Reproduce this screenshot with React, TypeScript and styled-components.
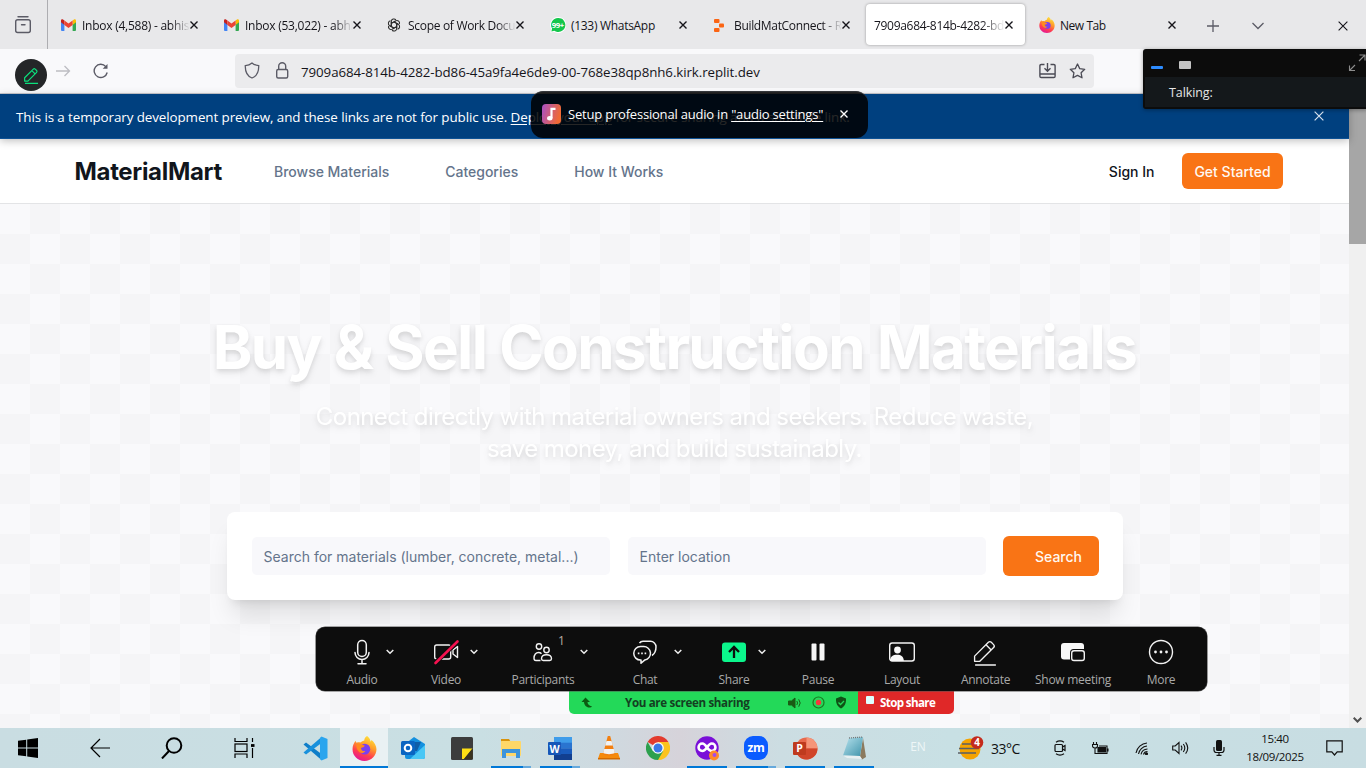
import React from "react";
import styled, { createGlobalStyle, css } from "styled-components";

const GlobalStyle = createGlobalStyle`
  * { box-sizing: border-box; }
  html, body { margin: 0; padding: 0; overflow: hidden; }
  body { font-family: "Open Sans", "Noto Sans", sans-serif; }
  svg { display: block; flex: none; }
`;

const Screen = styled.div`
  position: relative;
  width: 1366px;
  height: 768px;
  overflow: hidden;
  display: flex;
  flex-direction: column;
  background: #f9f9fb;
`;

/* ---------- browser tabs ---------- */

const TabStrip = styled.div`
  display: flex;
  align-items: stretch;
  height: 49px;
  background: #e8e8ea;
`;

const RecentButton = styled.div`
  flex: none;
  width: 48px;
  display: flex;
  align-items: center;
  padding-left: 13px;
  padding-top: 1px;
  border-right: 1px solid #adadb1;
  margin-right: 1px;
`;

const TabSlot = styled.div`
  flex: none;
  width: 163px;
  padding: 4px 2px;
`;

const Tab = styled.div<{ $active?: boolean }>`
  height: 41px;
  display: flex;
  align-items: center;
  padding: 1px 12px 0 ${(p) => (p.$active ? "8px" : "10px")};
  border-radius: 4px;
  ${(p) =>
    p.$active &&
    css`
      background: #fff;
      box-shadow: 0 0 3px rgba(0, 0, 0, 0.35);
    `}
`;

const TabTitle = styled.span<{ $fade: boolean; $spacing: number }>`
  flex: 1;
  min-width: 0;
  overflow: hidden;
  white-space: nowrap;
  padding-top: 1px;
  font-size: 12px;
  line-height: 18px;
  letter-spacing: ${(p) => p.$spacing}px;
  color: #15141a;
  ${(p) =>
    p.$fade &&
    css`
      mask-image: linear-gradient(to right, #000 82%, transparent 100%);
    `}
`;

const TabIcon = styled.span`
  width: 16px;
  margin-right: 5px;
`;

const StripButton = styled.div<{ $width: number }>`
  flex: none;
  width: ${(p) => p.$width}px;
  display: flex;
  align-items: center;
  justify-content: center;
  padding-top: 2px;
`;

/* ---------- toolbar ---------- */

const Toolbar = styled.div`
  display: flex;
  align-items: center;
  height: 45px;
  padding: 0 0 1px 56px;
  background: #f9f9fb;
  border-bottom: 1px solid #cacacf;
`;

const NavIcons = styled.div`
  display: flex;
  align-items: center;
  width: 179px;
  gap: 22px;
`;

const UrlBar = styled.div`
  display: flex;
  align-items: center;
  width: 859px;
  height: 34px;
  padding: 0 8px 0 9px;
  border-radius: 4px;
  background: #ebebed;
`;

const UrlIcon = styled.span<{ $gap: number }>`
  margin-right: ${(p) => p.$gap}px;
`;

const Url = styled.span`
  flex: 1;
  padding-top: 2px;
  font-size: 13.3px;
  letter-spacing: -0.07px;
  color: #15141a;
  white-space: nowrap;
`;

/* ---------- page ---------- */

const Viewport = styled.div`
  display: flex;
  height: 634px;
`;

const Page = styled.div`
  width: 1349px;
  display: flex;
  flex-direction: column;
`;

const Banner = styled.div`
  position: relative;
  display: flex;
  align-items: center;
  justify-content: space-between;
  height: 45px;
  padding: 2px 25px 0 16px;
  background: #00407f;
  border-bottom: 1px solid #0d5296;
  box-shadow: 0 2px 8px rgba(0, 0, 0, 0.25);
  color: #fff;
  font-size: 13.4px;
  letter-spacing: -0.09px;
  white-space: nowrap;
`;

const BannerClose = styled.span`
  padding-bottom: 2px;
`;

const Link = styled.span`
  text-decoration: underline;
  text-underline-offset: 2px;
`;

const SiteHeader = styled.header`
  display: flex;
  align-items: center;
  height: 65px;
  padding: 0 66px 0 74.5px;
  background: #fff;
  border-bottom: 1px solid #e3e4e6;
  font-family: Inter, sans-serif;
`;

const Brand = styled.div`
  width: 199.5px;
  font-size: 24px;
  font-weight: 700;
  letter-spacing: -0.33px;
  color: #11151c;
`;

const Nav = styled.nav`
  flex: 1;
  display: flex;
  gap: 56px;
  font-size: 14px;
  font-weight: 500;
  letter-spacing: -0.01px;
  color: #64748b;
`;

const SignIn = styled.span`
  margin-right: 27.5px;
  font-size: 14px;
  font-weight: 500;
  color: #11151c;
`;

const OrangeButton = styled.div<{ $w: number; $h: number; $padLeft?: number }>`
  width: ${(p) => p.$w}px;
  height: ${(p) => p.$h}px;
  padding-left: ${(p) => p.$padLeft ?? 0}px;
  display: flex;
  align-items: center;
  justify-content: center;
  border-radius: 6px;
  background: #f97415;
  color: #fff8f2;
  font-size: 14px;
  font-weight: 500;
  white-space: nowrap;
`;

const Hero = styled.main`
  flex: 1;
  display: flex;
  flex-direction: column;
  align-items: center;
  padding-top: 113px;
  background: repeating-conic-gradient(#f5f5f7 0 25%, #f9f9fb 0 50%) 0 0 / 60px 60px;
  font-family: Inter, sans-serif;
  color: #fff;
  text-align: center;
`;

const Title = styled.h1`
  margin: 0;
  font-size: 60px;
  line-height: 60px;
  font-weight: 700;
  letter-spacing: -1.56px;
  white-space: nowrap;
  filter: drop-shadow(0 4px 3px rgba(0, 0, 0, 0.08)) drop-shadow(0 2px 2px rgba(0, 0, 0, 0.07));
`;

const Subtitle = styled.p`
  margin: 24px 0 0;
  font-size: 24px;
  line-height: 32px;
  letter-spacing: -0.57px;
  white-space: nowrap;
  filter: drop-shadow(0 4px 3px rgba(0, 0, 0, 0.08)) drop-shadow(0 2px 2px rgba(0, 0, 0, 0.07));
`;

const SearchCard = styled.div`
  display: flex;
  align-items: center;
  width: 896px;
  height: 88px;
  margin-top: 47px;
  padding: 0 24px 0 25px;
  border-radius: 8px;
  background: #fff;
  box-shadow: 0 20px 25px -5px rgba(0, 0, 0, 0.1), 0 8px 10px -6px rgba(0, 0, 0, 0.1);
`;

const Field = styled.div<{ $gap: number }>`
  width: 358px;
  height: 38px;
  margin-right: ${(p) => p.$gap}px;
  padding: 0 12px;
  border-radius: 5px;
  background: #f8f8fb;
  color: #64748b;
  font-size: 14px;
  line-height: 39px;
  text-align: left;
`;

const Scrollbar = styled.div`
  width: 17px;
  display: flex;
  flex-direction: column;
  justify-content: space-between;
  align-items: center;
  background: #f0f0f0;
`;

const Thumb = styled.div`
  width: 17px;
  height: 150px;
  background: #a6a6a6;
`;

const ScrollArrow = styled.div`
  height: 11px;
`;

/* ---------- floating meeting pieces ---------- */

const AnnotateBadge = styled.div`
  position: absolute;
  left: 15px;
  top: 59px;
  width: 32px;
  height: 32px;
  display: flex;
  align-items: center;
  justify-content: center;
  border-radius: 50%;
  background: #242628;
`;

const Toast = styled.div`
  position: absolute;
  z-index: 3;
  left: 531px;
  top: 91px;
  width: 337px;
  height: 47px;
  display: flex;
  align-items: center;
  padding: 0 18px 2px 11px;
  border-radius: 12px;
  background: rgba(0, 0, 0, 0.85);
  border-top: 1px solid #34363a;
  color: #fff;
  font-size: 13px;
  white-space: nowrap;
`;

const ToastText = styled.span`
  width: 272px;
  margin-left: 7px;
  letter-spacing: -0.2px;
`;

const TalkPanel = styled.div`
  position: absolute;
  z-index: 3;
  left: 1143px;
  top: 49px;
  width: 225px;
  height: 60px;
  padding: 0 2px 2px;
  border-radius: 3px;
  background: #0c0c0c;
  box-shadow: 0 1px 4px rgba(0, 0, 0, 0.35);
`;

const TalkTop = styled.div`
  display: flex;
  align-items: center;
  height: 28px;
`;

const MiniMark = styled.span`
  width: 12px;
  height: 3px;
  margin: 9px 16px 0 6px;
  border-radius: 1px;
  background: #2d8cff;
`;

const StripMark = styled.span`
  width: 12px;
  height: 8px;
  margin: 4px 157px 0 0;
  border-radius: 1px;
  background: #c4c4c4;
`;

const TalkBody = styled.div`
  height: 30px;
  padding-left: 24px;
  line-height: 31px;
  background: #14181b;
  color: #e6e6e6;
  font-size: 12.5px;
  letter-spacing: -0.1px;
`;

const MeetingBar = styled.div`
  position: absolute;
  left: 316px;
  top: 627px;
  width: 891px;
  height: 64px;
  display: flex;
  padding: 0 4px;
  border-radius: 9px;
  background: #0d0d0d;
  box-shadow: 0 0 0 0.6px #555;
`;

const MeetingItem = styled.div<{ $w: number }>`
  position: relative;
  width: ${(p) => p.$w}px;
  display: flex;
  flex-direction: column;
  align-items: center;
  padding-top: 11px;
`;

const MeetingLabel = styled.span`
  margin-top: 5px;
  font-size: 12px;
  line-height: 18px;
  letter-spacing: -0.28px;
  color: #a9a9a9;
  white-space: nowrap;
`;

const Caret = styled.span`
  position: absolute;
  right: 10px;
  top: 22px;
`;

const Count = styled.span`
  position: absolute;
  left: 70px;
  top: 5px;
  font-size: 12px;
  color: #b9ada2;
`;

const ShareBar = styled.div`
  position: absolute;
  left: 569px;
  top: 691px;
  width: 385px;
  height: 23px;
  display: flex;
  border-radius: 0 0 5px 5px;
  overflow: hidden;
  font-size: 11.6px;
  font-weight: 700;
  letter-spacing: -0.34px;
  white-space: nowrap;
`;

const SharingPart = styled.div`
  display: flex;
  align-items: center;
  width: 289px;
  padding-left: 12px;
  background: #23d959;
  color: #143f22;
`;

const SharingText = styled.span`
  width: 163px;
  margin-left: 31px;
`;

const SharingIcons = styled.span`
  display: flex;
  align-items: center;
  gap: 10px;
`;

const StopPart = styled.div`
  display: flex;
  flex: 1;
  align-items: center;
  padding: 0 0 1px 8px;
  background: #e02828;
  color: #fff;
  letter-spacing: -0.62px;
`;

const StopSquare = styled.span`
  width: 8px;
  height: 8px;
  margin: 0 6px 4px 0;
  border-radius: 1px;
  background: #dff;
`;

/* ---------- taskbar ---------- */

const Taskbar = styled.div`
  display: flex;
  height: 40px;
  background: linear-gradient(
    to right,
    #c9dde2 0,
    #c9dfe3 480px,
    #cedae0 600px,
    #d6d3da 680px,
    #ccdde2 780px,
    #c8e0e4 950px,
    #c8dde2 1366px
  );
`;

const SystemGroup = styled.div`
  display: flex;
  width: 291px;
`;

const SystemButton = styled.div<{ $first?: boolean }>`
  width: ${(p) => (p.$first ? 64 : 72)}px;
  padding-right: ${(p) => (p.$first ? 8 : 0)}px;
  display: flex;
  align-items: center;
  justify-content: center;
`;

const AppGroup = styled.div`
  display: flex;
  gap: 1px;
  width: 587px;
`;

const AppButton = styled.div<{ $active?: boolean }>`
  width: 48px;
  display: flex;
  flex-direction: column;
  align-items: center;
  justify-content: space-between;
  padding-top: 7px;
  background: ${(p) => (p.$active ? "#e9f1f3" : "transparent")};
`;

const Underline = styled.span<{ $kind: "full" | "one" | "stack" }>`
  width: ${(p) => (p.$kind === "full" ? 48 : 40)}px;
  height: 2px;
  background: ${(p) =>
    p.$kind === "stack" ? "linear-gradient(to right, #0078d7 32px, #66a9dc 32px)" : "#0078d7"};
`;

const Tray = styled.div`
  display: flex;
  align-items: center;
  width: 488px;
  font-size: 12px;
  color: #111;
`;

const TrayCell = styled.div<{ $w: number; $ml?: number }>`
  width: ${(p) => p.$w}px;
  margin-left: ${(p) => p.$ml ?? 0}px;
  display: flex;
  align-items: center;
  justify-content: center;
`;

const Language = styled(TrayCell)`
  padding-bottom: 4px;
  color: #eef6f7;
`;

const Weather = styled(TrayCell)`
  justify-content: flex-start;
  gap: 7px;
  font-size: 14px;
  letter-spacing: -0.5px;
`;

const Clock = styled.div`
  width: 66px;
  margin-left: 3px;
  text-align: center;
  font-size: 11.5px;
  line-height: 18px;
  letter-spacing: -0.36px;
  padding-bottom: 1px;
`;

/* ---------- icons ---------- */

const CloseIcon = ({ size = 8, color = "#15141a", w = 1.4 }: { size?: number; color?: string; w?: number }) => (
  <svg width={size} height={size} viewBox="0 0 8 8" stroke={color} strokeWidth={(w * 8) / size} fill="none">
    <path d="M.5.5l7 7M7.5.5l-7 7" />
  </svg>
);

const Gmail = () => (
  <svg width="15" height="12" viewBox="0 0 15 12">
    <path d="M0 2v9a1 1 0 0 0 1 1h2.4V4.5z" fill="#4285f4" />
    <path d="M15 2v9a1 1 0 0 1-1 1h-2.4V4.5z" fill="#34a853" />
    <path d="M11.6 1.6L13 .5c1-.6 2 0 2 1.2v1.6l-3.4 2.6z" fill="#fbbc04" />
    <path d="M3.4 1.6L2 .5C1 0 0 .5 0 1.7v1.6l3.4 2.6z" fill="#c5221f" />
    <path d="M3.4 1.5L7.5 4.6l4.1-3.1v4.4L7.5 9 3.4 5.9z" fill="#ea4335" />
  </svg>
);

const Gpt = () => (
  <svg width="14" height="14" viewBox="0 0 14 14" fill="none" stroke="#2b2b2b" strokeWidth="1.05">
    {[0, 60, 120, 180, 240, 300].map((a) => (
      <path key={a} transform={`rotate(${a} 7 7)`} d="M4.3 8.4V3.5a2.6 2.6 0 0 1 4.6-1.6M4.3 5.4l4.2-2.4" />
    ))}
  </svg>
);

const WhatsApp = () => (
  <svg width="16" height="16" viewBox="0 0 16 16">
    <path d="M8 0a8 8 0 0 0-6.8 12L.3 15.7 4 14.8A8 8 0 1 0 8 0z" fill="#fff" />
    <path d="M8 1a7 7 0 0 0-5.9 10.6L1.4 14.4l2.9-.7A7 7 0 1 0 8 1z" fill="#14c64c" />
    <text x="7.8" y="10.8" textAnchor="middle" fontSize="7.8" fontWeight="700" fill="#fff" letterSpacing="-.5">
      99+
    </text>
  </svg>
);

const Replit = () => (
  <svg width="12" height="13" viewBox="0 0 12 13" fill="#fb6413">
    <rect x="1" y="0" width="5.5" height="4" rx="1" />
    <rect x="6" y="4.5" width="5" height="4" rx="1" />
    <rect x="1" y="9" width="5.5" height="4" rx="1" />
  </svg>
);

const Firefox = ({ size = 16 }: { size?: number }) => (
  <svg width={size} height={size} viewBox="0 0 24 24">
    <defs>
      <linearGradient id="ffx" x1=".75" y1="0" x2=".3" y2="1">
        <stop offset="0" stopColor="#ffe83b" />
        <stop offset=".4" stopColor="#ff9a2b" />
        <stop offset=".7" stopColor="#ff3f4f" />
        <stop offset="1" stopColor="#e3149a" />
      </linearGradient>
    </defs>
    <path
      d="M14.5 0c2 1.6 3 3 3.3 5.2C18.5 5 18.7 4.2 18.5 3.5c3 2.3 5 5.8 5 9.3C23.5 19 18.5 24 12 24S.5 19.2.5 12.8c0-3.5 1.3-6 3-8.3.1 1 .4 1.6 1 2C5.8 6 7 6 8 6.3c1.2-1.2 2.5-1.9 3.8-2.1C11.8 2.5 13 .9 14.5 0z"
      fill="url(#ffx)"
    />
    <circle cx="12.3" cy="12.6" r="5.2" fill="#7a3ff0" />
    <path d="M4 8c3-1.5 5 .5 8.200 1.200-.2 1.600-2 2-3.600 2.300.2 2.500 2 3.400 4.200 2.800C10.500 18 4.500 17 4 8z" fill="#ff8a20" />
  </svg>
);

const Pencil = ({ size, color, w }: { size: number; color: string; w: number }) => (
  <svg width={size} height={size} viewBox="-1 -1 26 26" fill="none" stroke={color} strokeWidth={w} strokeLinejoin="round">
    <path d="M1.5 20.5v-5L14.8 2.2a2 2 0 0 1 2.8 0l2.2 2.2a2 2 0 0 1 0 2.8L6.5 20.5zM12.5 4.5l5 5M2 24h20" />
  </svg>
);

const CaretDown = () => (
  <svg width="8" height="6" viewBox="0 0 8 6" fill="none" stroke="#eee" strokeWidth="1.5">
    <path d="M.7 1l3.3 3.3L7.300 1" />
  </svg>
);

const MicIcon = () => (
  <svg width="28" height="28" viewBox="0 0 28 28" fill="none" stroke="#f2f2f2" strokeWidth="1.5" strokeLinecap="round">
    <rect x="9.7" y="2.5" width="8.6" height="16" rx="4.3" />
    <path d="M7 14.5a7 7 0 0 0 14 0M14 21.500v4M10 25.700h8" />
  </svg>
);

const VideoIcon = () => (
  <svg width="28" height="28" viewBox="0 0 28 28" fill="none" stroke="#f2f2f2" strokeWidth="1.4" strokeLinejoin="round">
    <rect x="2.700" y="7" width="16" height="14" rx="2" />
    <path d="M21 12l4.500-3.500v11L21 16z" />
    <path d="M3 25L25.500 3.500" stroke="#0d0d0d" strokeWidth="4.500" />
    <path d="M3.500 25L25.500 3.500" stroke="#f5114f" strokeWidth="2.600" strokeLinecap="round" />
  </svg>
);

const PeopleIcon = () => (
  <svg width="28" height="28" viewBox="0 0 28 28" fill="none" stroke="#f2f2f2" strokeWidth="1.4" strokeLinejoin="round">
    <circle cx="10" cy="8.5" r="2.7" />
    <circle cx="17.5" cy="12" r="2.7" />
    <path d="M11.5 22.5H7c-1.5 0-2-.7-2-2.2 0-3.6 2-5.8 4.5-5.8 1.3 0 2.3.4 3 1.2" />
    <path d="M17.5 16.8c3 0 5 1.7 5 4 0 1.2-.7 1.7-1.8 1.7h-6.4c-1.1 0-1.8-.5-1.8-1.7 0-2.3 2-4 5-4z" />
  </svg>
);

const ChatIcon = () => (
  <svg width="28" height="28" viewBox="0 0 28 28" fill="none" stroke="#f2f2f2" strokeWidth="1.5" strokeLinejoin="round">
    <path d="M9.5 8.6h3a6.7 6.7 0 0 1 1.4 13.3L10 25.3v-3.2h-.5a6.75 6.75 0 0 1 0-13.5z" />
    <path d="M8.5 5.2C9.3 3.8 10.6 3.3 12 3.3h7.5a5.5 5.5 0 0 1 5.5 5.5c0 4-1.3 7-4 8.7" />
    <path d="M6.8 15.3h1.6M10.2 15.3h1.6M13.6 15.3h1.6" strokeWidth="1.8" />
  </svg>
);

const ShareIcon = () => (
  <svg width="28" height="28" viewBox="0 0 28 28">
    <rect x="2" y="4.5" width="24" height="19.5" rx="3" fill="#0bf68c" />
    <path d="M14 20V9.5M9 14l5-5 5 5" fill="none" stroke="#0d0d0d" strokeWidth="2.3" />
  </svg>
);

const PauseIcon = () => (
  <svg width="28" height="28" viewBox="0 0 28 28" fill="#f6f6f6">
    <rect x="7.5" y="5.5" width="5" height="17" rx="1" />
    <rect x="15.5" y="5.5" width="5" height="17" rx="1" />
  </svg>
);

const LayoutIcon = () => (
  <svg width="28" height="28" viewBox="0 0 28 28">
    <rect x="1.7" y="5" width="24.6" height="18" rx="2.5" fill="none" stroke="#f2f2f2" strokeWidth="1.4" />
    <circle cx="9.5" cy="12" r="3.4" fill="#f8f8f8" />
    <path d="M2 23c0-4.5 3-6.3 7-6.3s6.8 1.8 6.8 6.3z" fill="#f8f8f8" />
  </svg>
);

const ShowMeetingIcon = () => (
  <svg width="28" height="28" viewBox="0 0 28 28">
    <rect x="2" y="5" width="23" height="16.5" rx="3" fill="#f8f8f8" />
    <rect x="11" y="11" width="17" height="13.5" rx="3.5" fill="#0d0d0d" />
    <rect x="12.7" y="12.7" width="12.6" height="9.8" rx="2.3" fill="none" stroke="#f2f2f2" strokeWidth="1.4" />
  </svg>
);

const MoreIcon = () => (
  <svg width="28" height="28" viewBox="0 0 28 28" fill="#f2f2f2">
    <circle cx="14" cy="14" r="11.5" fill="none" stroke="#f2f2f2" strokeWidth="1.4" />
    <circle cx="8.5" cy="14" r="1.4" />
    <circle cx="14" cy="14" r="1.4" />
    <circle cx="19.5" cy="14" r="1.4" />
  </svg>
);

const VSCode = () => (
  <svg width="25" height="25" viewBox="0 0 25 25">
    <path d="M.5 8.5L3 6.500 18.500 18v6z" fill="#0f7ec9" />
    <path d="M.5 16.500l2.500 2L18.500 7V1z" fill="#1991dc" />
    <path d="M18.500.5L24.500 3v19l-6 2.500L17 23V2z" fill="#2aa5ee" />
  </svg>
);

const Outlook = () => (
  <svg width="25" height="24" viewBox="0 0 25 24">
    <path d="M4 8l9-7 11 7v13a2 2 0 0 1-2 2H6a2 2 0 0 1-2-2z" fill="#1490df" />
    <path d="M6 6h14l-4 9H6z" fill="#0f5ea8" />
    <path d="M24 9v12a2 2 0 0 1-2 2H9z" fill="#4ac7f5" />
    <rect x="0" y="5" width="14" height="14" rx="1.5" fill="#0a65c2" />
    <circle cx="7" cy="12" r="3.3" fill="none" stroke="#fff" strokeWidth="2" />
  </svg>
);

const StickyNotes = () => (
  <svg width="22" height="23" viewBox="0 0 22 23">
    <rect width="22" height="23" rx="1.5" fill="#3c3c3c" />
    <path d="M11 11.5h10.500L13 22h-2z" fill="#ffe014" />
    <path d="M21.500 11.500V22H13z" fill="#3a3420" />
  </svg>
);

const Explorer = () => (
  <svg width="22" height="21" viewBox="0 0 22 21">
    <path d="M1 1h8l1.500 2.500H1z" fill="#d9930c" />
    <rect x="1" y="3" width="20" height="15" rx="1" fill="#ffd768" />
    <path d="M2 11h18v9h-4v-5H6v5H2z" fill="#3d94db" />
  </svg>
);

const Word = () => (
  <svg width="25" height="23" viewBox="0 0 25 23">
    <rect x="6" width="18" height="6" fill="#3f9cea" />
    <rect x="6" y="5.7" width="18" height="6" fill="#2a74d0" />
    <rect x="6" y="11.4" width="18" height="6" fill="#195bbd" />
    <rect x="6" y="17" width="18" height="6" fill="#123f90" />
    <rect x="0" y="5" width="13" height="13" rx="1" fill="#1757b8" />
    <text x="6.5" y="15.5" textAnchor="middle" fontSize="10.5" fontWeight="700" fill="#fff">
      W
    </text>
  </svg>
);

const Vlc = () => (
  <svg width="22" height="24" viewBox="0 0 22 24">
    <path d="M2 17h18l2 5.500H0z" fill="#f58a0c" />
    <path d="M9.800 0h2.400L17 18c-2.500 2-9.500 2-12 0z" fill="#f27f10" />
    <path d="M8.500 5h5l1.300 4.500H7.200zM6.200 13h9.600l1 4c-2.500 1.500-9 1.500-11.600 0z" fill="#f2f2f2" />
    <path d="M0 22h22v1.500H0z" fill="#d36a00" />
  </svg>
);

const Chrome = () => (
  <svg width="24" height="24" viewBox="0 0 24 24">
    <path d="M12 12L1.600 6A12 12 0 0 1 22.400 6z" fill="#e33b2e" />
    <path d="M12 12V6h10.400A12 12 0 0 1 12 24z" fill="#fcc31e" />
    <path d="M12 12l5.200 3L12 24A12 12 0 0 1 1.600 6l5.200 9z" fill="#2da04e" />
    <circle cx="12" cy="12" r="5.8" fill="#fff" />
    <circle cx="12" cy="12" r="4.5" fill="#3b78e7" />
  </svg>
);

const VioletApp = () => (
  <svg width="25" height="25" viewBox="0 0 25 25">
    <circle cx="12" cy="12" r="11.7" fill="#7a10d8" />
    <path
      d="M12 11.500C10 8.300 9 7.500 7.300 7.500a3.700 3.700 0 0 0 0 7.500c1.800 0 2.800-.8 4.700-3.500 2-3.200 3-4 4.700-4a3.700 3.700 0 0 1 0 7.500c-1.800 0-2.800-.8-4.700-3.500z"
      fill="none"
      stroke="#fff"
      strokeWidth="2.6"
    />
    <circle cx="19" cy="19.500" r="5" fill="#ff8a2a" />
    <circle cx="19.500" cy="19" r="2" fill="#a14cf0" />
  </svg>
);

const ZoomApp = () => (
  <svg width="24" height="24" viewBox="0 0 24 24">
    <rect width="24" height="24" rx="9" fill="#0b5cff" />
    <text x="12" y="16" textAnchor="middle" fontSize="12" fontWeight="700" fill="#fff" letterSpacing="-.3">
      zm
    </text>
  </svg>
);

const PowerPoint = () => (
  <svg width="25" height="23" viewBox="0 0 25 23">
    <circle cx="13.5" cy="11.5" r="11" fill="#e8694c" />
    <path d="M13.500.5a11 11 0 0 1 11 11h-11z" fill="#f59579" />
    <path d="M24.500 11.500a11 11 0 0 1-20 6.200l9-6.200z" fill="#d0452a" />
    <rect x="0" y="5" width="13" height="13" rx="1" fill="#bf3a1e" />
    <text x="6.5" y="15.3" textAnchor="middle" fontSize="10.5" fontWeight="700" fill="#fff">
      P
    </text>
  </svg>
);

const Notepad = () => (
  <svg width="25" height="24" viewBox="0 0 25 24">
    <defs>
      <linearGradient id="np" x1="0" y1="0" x2="1" y2="1">
        <stop offset="0" stopColor="#b9e3ee" />
        <stop offset="1" stopColor="#3f94ab" />
      </linearGradient>
    </defs>
    <path d="M21 2l3 19-4 2.500-2-3z" fill="#8b7a5e" />
    <path d="M7 2l14-1-3 19-17-.5z" fill="url(#np)" />
    <path d="M1 19.500l17 .5 2 3-15-1z" fill="#e7f0f2" />
    <path d="M7 2l14-1" stroke="#777" strokeWidth="1.3" strokeDasharray="1 1" />
  </svg>
);

/* ---------- data ---------- */

const tabs: { title: string; icon?: React.ReactNode; fade: boolean; active?: boolean; spacing: number }[] = [
  { title: "Inbox (4,588) - abhishek", icon: <Gmail />, fade: true, spacing: -0.25 },
  { title: "Inbox (53,022) - abhishek", icon: <Gmail />, fade: true, spacing: -0.25 },
  { title: "Scope of Work Document", icon: <Gpt />, fade: true, spacing: -0.3 },
  { title: "(133) WhatsApp", icon: <WhatsApp />, fade: false, spacing: -0.3 },
  { title: "BuildMatConnect - Replit", icon: <Replit />, fade: true, spacing: -0.33 },
  { title: "7909a684-814b-4282-bd86", fade: true, active: true, spacing: -0.3 },
  { title: "New Tab", icon: <Firefox />, fade: false, spacing: -0.45 },
];

const meetingItems: { label: string; w: number; icon: React.ReactNode; caret?: boolean; count?: string }[] = [
  { label: "Audio", w: 84, icon: <MicIcon />, caret: true },
  { label: "Video", w: 84, icon: <VideoIcon />, caret: true },
  { label: "Participants", w: 110, icon: <PeopleIcon />, caret: true, count: "1" },
  { label: "Chat", w: 94, icon: <ChatIcon />, caret: true },
  { label: "Share", w: 84, icon: <ShareIcon />, caret: true },
  { label: "Pause", w: 84, icon: <PauseIcon /> },
  { label: "Layout", w: 84, icon: <LayoutIcon /> },
  { label: "Annotate", w: 83, icon: <Pencil size={27} color="#f2f2f2" w={1.3} /> },
  { label: "Show meeting", w: 92, icon: <ShowMeetingIcon /> },
  { label: "More", w: 84, icon: <MoreIcon /> },
];

const apps: { icon: React.ReactNode; line?: "full" | "one" | "stack"; active?: boolean }[] = [
  { icon: <VSCode /> },
  { icon: <Firefox size={25} />, line: "full", active: true },
  { icon: <Outlook /> },
  { icon: <StickyNotes /> },
  { icon: <Explorer />, line: "stack" },
  { icon: <Word />, line: "stack" },
  { icon: <Vlc /> },
  { icon: <Chrome /> },
  { icon: <VioletApp />, line: "one" },
  { icon: <ZoomApp />, line: "stack" },
  { icon: <PowerPoint />, line: "one" },
  { icon: <Notepad />, line: "one" },
];

const AppIcon = styled.span`
  display: flex;
  align-items: center;
  height: 26px;
`;

const ItemIcon = styled.span`
  display: flex;
  align-items: center;
  height: 28px;
`;

export default function App() {
  return (
    <Screen>
      <GlobalStyle />
      <TabStrip>
        <RecentButton>
          <svg width="20" height="18" viewBox="0 0 20 18" fill="none" stroke="#5b5b66" strokeWidth="1.4" strokeLinecap="round">
            <path d="M5 .8h10" />
            <rect x="2.7" y="3.8" width="14.6" height="12.7" rx="2" />
            <path d="M8.500 8.800h3.500" />
          </svg>
        </RecentButton>
        {tabs.map((t) => (
          <TabSlot key={t.title}>
            <Tab $active={t.active}>
              {t.icon && <TabIcon>{t.icon}</TabIcon>}
              <TabTitle $fade={t.fade} $spacing={t.spacing}>
                {t.title}
              </TabTitle>
              <CloseIcon />
            </Tab>
          </TabSlot>
        ))}
        <StripButton $width={45}>
          <svg width="12" height="12" viewBox="0 0 12 12" stroke="#5b5b66" strokeWidth="1.3">
            <path d="M6 0v12M0 6h12" />
          </svg>
        </StripButton>
        <StripButton $width={46}>
          <svg width="12" height="8" viewBox="0 0 12 8" fill="none" stroke="#5b5b66" strokeWidth="1.3">
            <path d="M.5 1L6 6.500 11.500 1" />
          </svg>
        </StripButton>
        <StripButton $width={124}>
          <CloseIcon size={10} w={1.1} />
        </StripButton>
      </TabStrip>

      <Toolbar>
        <NavIcons>
          <svg width="15" height="12" viewBox="0 0 15 12" fill="none" stroke="#bdbdc2" strokeWidth="1.3">
            <path d="M0 6h13.500M8.500 1l5 5-5 5" />
          </svg>
          <svg width="16" height="16" viewBox="0 0 16 16" fill="none" stroke="#5b5b66" strokeWidth="1.4">
            <path d="M14.200 9.500A6.600 6.600 0 1 1 12.800 3.600" />
            <path d="M14.500 1v4.800H9.700z" fill="#5b5b66" stroke="none" />
          </svg>
        </NavIcons>
        <UrlBar>
          <UrlIcon $gap={14}>
            <svg width="16" height="17" viewBox="0 0 16 17" fill="none" stroke="#5b5b66" strokeWidth="1.3">
              <path d="M8 1c2 1.700 4 2.400 6.700 2.600C14.900 9.500 13 14 8 16 3 14 1.100 9.500 1.300 3.600 4 3.400 6 2.700 8 1z" />
            </svg>
          </UrlIcon>
          <UrlIcon $gap={11}>
            <svg width="16" height="17" viewBox="0 0 16 17" fill="none" stroke="#5b5b66" strokeWidth="1.4">
              <rect x="2.7" y="7.5" width="11" height="8.5" rx="1.5" />
              <path d="M4.700 7.500V4.300a3.500 3.500 0 0 1 7 0v3.200" />
            </svg>
          </UrlIcon>
          <Url>7909a684-814b-4282-bd86-45a9fa4e6de9-00-768e38qp8nh6.kirk.replit.dev</Url>
          <UrlIcon $gap={13}>
            <svg width="17" height="16" viewBox="0 0 17 16" fill="none" stroke="#4b4b55" strokeWidth="1.4">
              <path d="M5.500 1.500H2.200c-.8 0-1.300.5-1.300 1.300v10.400c0 .8.500 1.300 1.300 1.300h12.600c.8 0 1.300-.5 1.300-1.300V2.800c0-.8-.5-1.300-1.300-1.300h-3.300M1 11h15M8.500 0v8M5.500 5.300l3 3 3-3" />
            </svg>
          </UrlIcon>
          <svg width="17" height="16" viewBox="0 0 17 16" fill="none" stroke="#4b4b55" strokeWidth="1.3" strokeLinejoin="round">
            <path d="M8.500 1l2.200 4.600 5 .7-3.600 3.500.9 5-4.500-2.400L4 14.800l.9-5L1.300 6.300l5-.7z" />
          </svg>
        </UrlBar>
      </Toolbar>

      <Viewport>
        <Page>
          <Banner>
            <span>
              This is a temporary development preview, and these links are not for public use.{" "}
              <Link>Deploy your app</Link> for secure sharing and a sharable link.
            </span>
            <BannerClose>
              <CloseIcon size={10} w={1.2} color="#d9e4f0" />
            </BannerClose>
          </Banner>
          <SiteHeader>
            <Brand>MaterialMart</Brand>
            <Nav>
              <span>Browse Materials</span>
              <span>Categories</span>
              <span>How It Works</span>
            </Nav>
            <SignIn>Sign In</SignIn>
            <OrangeButton $w={101} $h={36}>
              Get Started
            </OrangeButton>
          </SiteHeader>
          <Hero>
            <Title>Buy &amp; Sell Construction Materials</Title>
            <Subtitle>
              Connect directly with material owners and seekers. Reduce waste,
              <br />
              save money, and build sustainably.
            </Subtitle>
            <SearchCard>
              <Field $gap={18}>Search for materials (lumber, concrete, metal...)</Field>
              <Field $gap={17}>Enter location</Field>
              <OrangeButton $w={96} $h={40} $padLeft={16}>
                Search
              </OrangeButton>
            </SearchCard>
          </Hero>
        </Page>
        <Scrollbar>
          <Thumb />
          <ScrollArrow>
            <svg width="9" height="6" viewBox="0 0 9 6" fill="none" stroke="#505050" strokeWidth="2">
              <path d="M.7.7l3.800 3.800L8.300.7" />
            </svg>
          </ScrollArrow>
        </Scrollbar>
      </Viewport>

      <Taskbar>
        <SystemGroup>
          <SystemButton $first>
            <svg width="20" height="20" viewBox="0 0 20 20" fill="#000">
              <path d="M0 2.800l8.200-1.100v7.800H0zM9.200 1.500L20 0v9.500H9.200zM0 10.500h8.200v7.800L0 17.200zM9.200 10.500H20V20L9.200 18.500z" />
            </svg>
          </SystemButton>
          <SystemButton>
            <svg width="20" height="20" viewBox="0 0 20 20" fill="none" stroke="#000" strokeWidth="1.2">
              <path d="M20 10H1M10 1L1 10l9 9" />
            </svg>
          </SystemButton>
          <SystemButton>
            <svg width="22" height="22" viewBox="0 0 22 22" fill="none" stroke="#000" strokeWidth="2">
              <circle cx="13" cy="8.5" r="7.3" />
              <path d="M8 14l-7 7.500" />
            </svg>
          </SystemButton>
          <SystemButton>
            <svg width="21" height="20" viewBox="0 0 21 20" fill="none" stroke="#000" strokeWidth="1.2">
              <path d="M1 0v3.500h12V0M1 20v-4h12v4M18.500 0v4M18.500 10v10" />
              <rect x="1" y="6" width="12" height="7.5" />
              <path d="M17 7.500h3.500" strokeWidth="2.8" />
            </svg>
          </SystemButton>
        </SystemGroup>
        <AppGroup>
          {apps.map((a, i) => (
            <AppButton key={i} $active={a.active}>
              <AppIcon>{a.icon}</AppIcon>
              {a.line && <Underline $kind={a.line} />}
            </AppButton>
          ))}
        </AppGroup>
        <Tray>
          <Language $w={80}>EN</Language>
          <Weather $w={82}>
            <svg width="26" height="24" viewBox="0 0 26 24">
              <circle cx="12" cy="13" r="10.5" fill="#f5a300" />
              <path d="M4 8h15M1 12.500h20M0 17h18" stroke="#5a5f66" strokeWidth="1.7" />
              <circle cx="19" cy="6.5" r="6.3" fill="#c42b1c" />
              <text x="19" y="10" textAnchor="middle" fontSize="10" fontWeight="700" fill="#fff" letterSpacing="0">
                4
              </text>
            </svg>
            33°C
          </Weather>
          <TrayCell $w={40}>
            <svg width="12" height="16" viewBox="0 0 12 16" fill="none" stroke="#111" strokeWidth="1.2">
              <path d="M2 2.200Q6-.5 10 2.200M2 13.800q4 2.700 8 0M8.500 7l2.500-1.500v5L8.500 9" />
              <rect x="1" y="4.5" width="7.5" height="7" rx="1" />
            </svg>
          </TrayCell>
          <TrayCell $w={40}>
            <svg width="17" height="13" viewBox="0 0 17 13" fill="none" stroke="#111" strokeWidth="1.1">
              <path d="M1.500 0v2.500M4.500 0v2.500M.5 2.500h5v1.500q0 2-2.500 2t-2.500-2zM3 6v5.500h12V4H7M16 6.500v3" />
              <rect x="6" y="5.5" width="7.5" height="4.5" fill="#111" />
            </svg>
          </TrayCell>
          <TrayCell $w={40} $ml={2}>
            <svg width="14" height="14" viewBox="0 0 14 14" fill="none" stroke="#111" strokeWidth="1.1">
              <path d="M1 12A12 12 0 0 1 12 2M3.500 13A9.500 9.500 0 0 1 12 5M6 13.300A7 7 0 0 1 12.500 8M8.500 13.500A4 4 0 0 1 12.500 10.500" />
              <circle cx="11.5" cy="12.7" r="1" fill="#111" />
            </svg>
          </TrayCell>
          <TrayCell $w={37}>
            <svg width="17" height="14" viewBox="0 0 17 14" fill="none" stroke="#111" strokeWidth="1.1">
              <path d="M.7 5v4h2.500L7 12.500v-11L3.200 5zM9 4.700q1.800 2.300 0 4.600M11.300 3q3 4 0 8M13.600 1.300q4.300 5.700 0 11.400" />
            </svg>
          </TrayCell>
          <TrayCell $w={40}>
            <svg width="12" height="16" viewBox="0 0 12 16" fill="none" stroke="#111" strokeWidth="1.2">
              <rect x="3" y="0" width="6" height="11" rx="1.5" fill="#111" stroke="none" />
              <path d="M1 7v3q0 2.500 2.500 2.500h5Q11 12.500 11 10V7M6 12.500V15M3.500 15.300h5" />
            </svg>
          </TrayCell>
          <Clock>
            15:40
            <br />
            18/09/2025
          </Clock>
          <TrayCell $w={40} $ml={6}>
            <svg width="17" height="16" viewBox="0 0 17 16" fill="none" stroke="#111" strokeWidth="1.2">
              <path d="M.8.800h15.400v11h-5L8.500 15l-2.700-3.200h-5z" />
            </svg>
          </TrayCell>
        </Tray>
      </Taskbar>

      <AnnotateBadge>
        <Pencil size={17} color="#0be07c" w={1.8} />
      </AnnotateBadge>

      <Toast>
        <svg width="19" height="20" viewBox="0 0 19 20">
          <defs>
            <linearGradient id="note" x1="0" y1="0" x2="1" y2=".3">
              <stop offset="0" stopColor="#a850c8" />
              <stop offset="1" stopColor="#f06a35" />
            </linearGradient>
          </defs>
          <rect width="19" height="20" rx="4" fill="url(#note)" />
          <path d="M9.500 14V4.800h4" fill="none" stroke="#fff" strokeWidth="2.2" />
          <ellipse cx="7.800" cy="14.200" rx="2.700" ry="2.200" fill="#fff" />
        </svg>
        <ToastText>
          Setup professional audio in <Link>"audio settings"</Link>
        </ToastText>
        <CloseIcon size={8} color="#fff" w={1.4} />
      </Toast>

      <TalkPanel>
        <TalkTop>
          <MiniMark />
          <StripMark />
          <svg width="18" height="18" viewBox="0 0 18 18" fill="none" stroke="#8d8d8d" strokeWidth="1.1">
            <path d="M11 7l6-6M11.500 1H17v5.500M7 11l-5.500 5.500M1.500 11.500v5H7" />
          </svg>
        </TalkTop>
        <TalkBody>Talking:</TalkBody>
      </TalkPanel>

      <ShareBar>
        <SharingPart>
          <svg width="13" height="12" viewBox="0 0 13 12">
            <path d="M4.500.5L9 5H6.500c0 2.500 1.500 3.500 4.500 4.500-1 1.500-7.500 2-8-4.500H.5z" fill="#0c5c12" />
          </svg>
          <SharingText>You are screen sharing</SharingText>
          <SharingIcons>
            <svg width="14" height="12" viewBox="0 0 14 12" fill="none" stroke="#1a5c14">
              <path d="M.5 4h3L7 1v10L3.500 8h-3z" fill="#1a5c14" />
              <path d="M8.800 4q1.500 2 0 4M10.700 2.300q3 3.700 0 7.400" />
            </svg>
            <svg width="13" height="13" viewBox="0 0 13 13">
              <circle cx="6.5" cy="6.5" r="5.5" fill="none" stroke="#1a7a22" strokeWidth="1.2" />
              <circle cx="6.5" cy="6.5" r="2.7" fill="#f5383c" />
            </svg>
            <svg width="12" height="13" viewBox="0 0 12 13">
              <path d="M6 .5l5 2c.3 5-1.500 8-5 10-3.500-2-5.300-5-5-10z" fill="#0f5216" />
              <path d="M3.500 6.500l2 2 3.500-3.500" fill="none" stroke="#23d959" strokeWidth="1.3" />
            </svg>
          </SharingIcons>
        </SharingPart>
        <StopPart>
          <StopSquare />
          Stop share
        </StopPart>
      </ShareBar>

      <MeetingBar>
        {meetingItems.map((m) => (
          <MeetingItem key={m.label} $w={m.w}>
            <ItemIcon>{m.icon}</ItemIcon>
            <MeetingLabel>{m.label}</MeetingLabel>
            {m.caret && (
              <Caret>
                <CaretDown />
              </Caret>
            )}
            {m.count && <Count>{m.count}</Count>}
          </MeetingItem>
        ))}
      </MeetingBar>
    </Screen>
  );
}
